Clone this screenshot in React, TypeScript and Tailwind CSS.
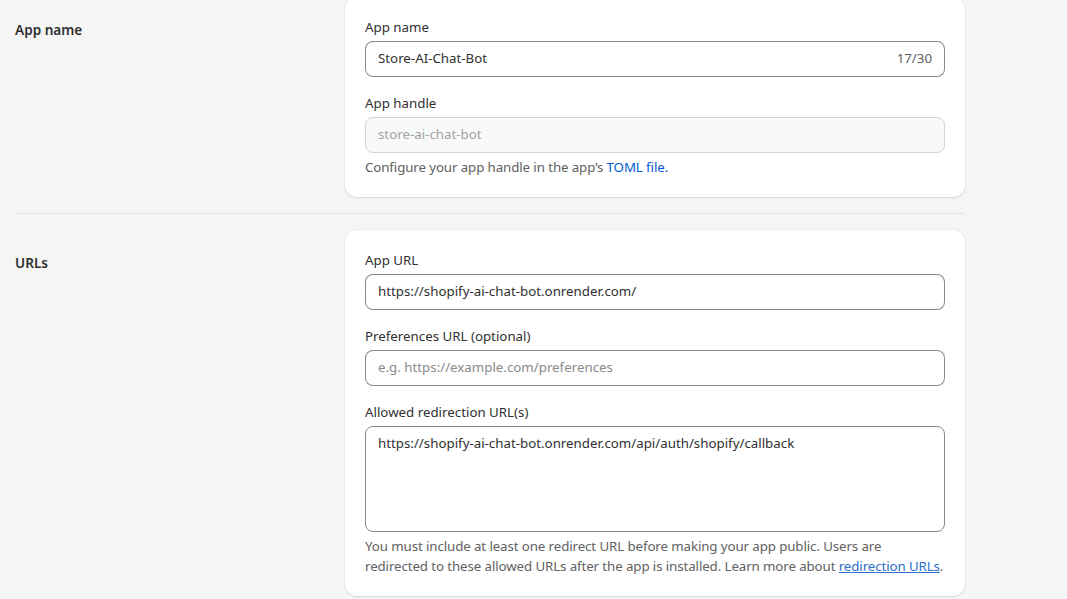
const font = { fontFamily: '"Noto Sans", "Open Sans", sans-serif' };

function Label({ children }: { children: React.ReactNode }) {
  return <div className="text-[13.3px] leading-[20px] text-[#303030]">{children}</div>;
}

function Input({ value, placeholder, suffix }: { value?: string; placeholder?: string; suffix?: string }) {
  return (
    <div className="mt-1 h-9 rounded-lg border border-[#8a8a8a] border-t-[#898989] bg-white px-3 flex items-center justify-between">
      {value ? (
        <span className="text-[13.3px] text-[#303030]">{value}</span>
      ) : (
        <span className="text-[13.3px] text-[#8a8a8a]">{placeholder}</span>
      )}
      {suffix && <span className="text-[13.3px] text-[#616161]">{suffix}</span>}
    </div>
  );
}

function Help({ children }: { children: React.ReactNode }) {
  return (
    <div className="mt-1 whitespace-nowrap text-[13.3px] leading-[20px] tracking-[-0.1px] text-[#616161]">
      {children}
    </div>
  );
}

function Section({ title, children }: { title: string; children: React.ReactNode }) {
  return (
    <div className="flex">
      <div className="w-[330px] pt-[23px]">
        <h2 className="text-[13.6px] leading-[20px] font-semibold text-[#303030]">{title}</h2>
      </div>
      <div className="w-[620px] rounded-xl bg-white p-5 shadow-[0_1px_2px_rgba(0,0,0,0.10),0_0_0_1px_rgba(0,0,0,0.03)]">
        {children}
      </div>
    </div>
  );
}

export default function App() {
  return (
    <div style={font} className="h-[599px] w-full overflow-hidden bg-[#f5f5f5]">
      <div className="-mt-[3px] pl-[15px] w-[965px]">
        <Section title="App name">
          <Label>App name</Label>
          <Input value="Store-AI-Chat-Bot" suffix="17/30" />
          <div className="mt-4">
            <Label>App handle</Label>
          </div>
          <div className="mt-1 h-9 rounded-lg border border-[#d4d4d4] bg-[#f8f9f9] px-3 flex items-center">
            <span className="text-[13.3px] text-[#a3a3a3]">store-ai-chat-bot</span>
          </div>
          <Help>
            Configure your app handle in the app’s <span className="text-[#005bd3]">TOML file.</span>
          </Help>
        </Section>

        <div className="my-4 border-t border-[#e3e3e3]" />

        <Section title="URLs">
          <Label>App URL</Label>
          <Input value="https://shopify-ai-chat-bot.onrender.com/" />
          <div className="mt-4">
            <Label>Preferences URL (optional)</Label>
          </div>
          <Input placeholder="e.g. https://example.com/preferences" />
          <div className="mt-4">
            <Label>Allowed redirection URL(s)</Label>
          </div>
          <div className="mt-1 h-[106px] rounded-lg border border-[#8a8a8a] bg-white px-3 py-[6px]">
            <div className="text-[13.3px] leading-[20px] text-[#303030]">
              https://shopify-ai-chat-bot.onrender.com/api/auth/shopify/callback
            </div>
          </div>
          <Help>
            You must include at least one redirect URL before making your app public. Users are
            <br />
            redirected to these allowed URLs after the app is installed. Learn more about{" "}
            <a className="text-[#2c6ecb] underline">redirection URLs</a>.
          </Help>
        </Section>
      </div>
    </div>
  );
}
